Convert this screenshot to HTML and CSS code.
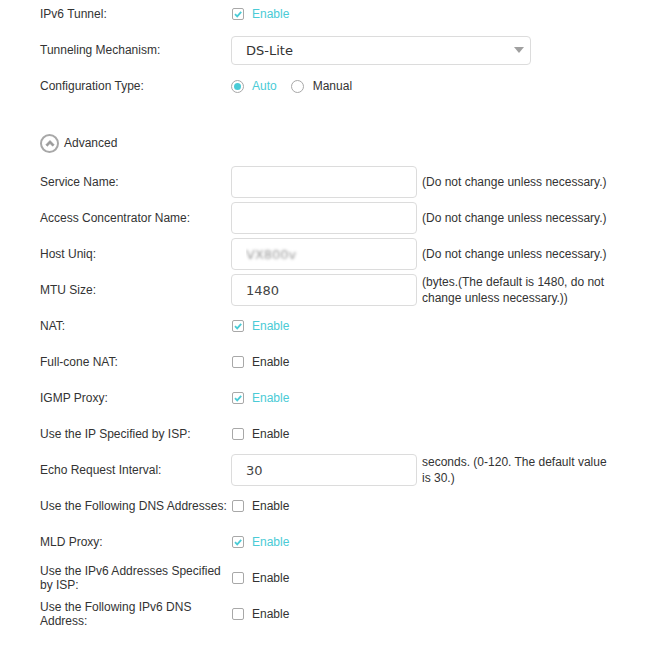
FILE: index.html
```html
<!DOCTYPE html>
<html lang="en">
<head>
  <meta charset="UTF-8" />
  <title>IPv6 - DS-Lite</title>
  <link rel="stylesheet" href="styles.css">
</head>
<body>

<!-- IPv6 tunnel settings -->
<div class="form">
  <div class="row">
    <div class="label">IPv6 Tunnel:</div>
    <label class="check on">
      <span class="box"><svg viewBox="0 0 12 12" width="12" height="12"><path d="M3 6.2 L5.2 8.4 L9.2 3.8" fill="none" stroke="#4acbd6" stroke-width="1.8"/></svg></span>
      Enable
    </label>
  </div>

  <div class="row">
    <div class="label">Tunneling Mechanism:</div>
    <div class="select">
      <span>DS-Lite</span>
      <svg class="arrow" viewBox="0 0 10 6" width="10" height="6"><path d="M0 0 H10 L5 6 Z" fill="#a0a0a0"/></svg>
    </div>
  </div>

  <div class="row">
    <div class="label">Configuration Type:</div>
    <label class="radio on"><span class="dot"></span>Auto</label>
    <label class="radio"><span class="dot"></span>Manual</label>
  </div>

  <!-- Advanced block -->
  <div class="advanced">
    <span class="adv-icon"><svg viewBox="0 0 14 14" width="14" height="14"><path d="M2.8 8.8 L7 4.4 L11.2 8.8 L9.6 10.2 L7 7.6 L4.4 10.2 Z" fill="#9a9a9a" stroke="#9a9a9a" stroke-width="0.6" stroke-linejoin="round"/></svg></span>
    Advanced
  </div>

  <div class="row">
    <div class="label">Service Name:</div>
    <input class="text" type="text" value="">
    <div class="hint">(Do not change unless necessary.)</div>
  </div>

  <div class="row">
    <div class="label">Access Concentrator Name:</div>
    <input class="text" type="text" value="">
    <div class="hint">(Do not change unless necessary.)</div>
  </div>

  <div class="row">
    <div class="label">Host Uniq:</div>
    <input class="text blurred" type="text" value="VX800v">
    <div class="hint">(Do not change unless necessary.)</div>
  </div>

  <div class="row">
    <div class="label">MTU Size:</div>
    <input class="text" type="text" value="1480">
    <div class="hint">(bytes.(The default is 1480, do not change unless necessary.))</div>
  </div>

  <div class="row">
    <div class="label">NAT:</div>
    <label class="check on">
      <span class="box"><svg viewBox="0 0 12 12" width="12" height="12"><path d="M3 6.2 L5.2 8.4 L9.2 3.8" fill="none" stroke="#4acbd6" stroke-width="1.8"/></svg></span>
      Enable
    </label>
  </div>

  <div class="row">
    <div class="label">Full-cone NAT:</div>
    <label class="check"><span class="box"></span>Enable</label>
  </div>

  <div class="row">
    <div class="label">IGMP Proxy:</div>
    <label class="check on">
      <span class="box"><svg viewBox="0 0 12 12" width="12" height="12"><path d="M3 6.2 L5.2 8.4 L9.2 3.8" fill="none" stroke="#4acbd6" stroke-width="1.8"/></svg></span>
      Enable
    </label>
  </div>

  <div class="row">
    <div class="label">Use the IP Specified by ISP:</div>
    <label class="check"><span class="box"></span>Enable</label>
  </div>

  <div class="row">
    <div class="label">Echo Request Interval:</div>
    <input class="text" type="text" value="30">
    <div class="hint">seconds. (0-120. The default value is 30.)</div>
  </div>

  <div class="row">
    <div class="label">Use the Following DNS Addresses:</div>
    <label class="check"><span class="box"></span>Enable</label>
  </div>

  <div class="row">
    <div class="label">MLD Proxy:</div>
    <label class="check on">
      <span class="box"><svg viewBox="0 0 12 12" width="12" height="12"><path d="M3 6.2 L5.2 8.4 L9.2 3.8" fill="none" stroke="#4acbd6" stroke-width="1.8"/></svg></span>
      Enable
    </label>
  </div>

  <div class="row">
    <div class="label">Use the IPv6 Addresses Specified by ISP:</div>
    <label class="check"><span class="box"></span>Enable</label>
  </div>

  <div class="row">
    <div class="label">Use the Following IPv6 DNS Address:</div>
    <label class="check"><span class="box"></span>Enable</label>
  </div>
</div>

</body>
</html>
```

FILE: styles.css
```css
* {
  margin: 0;
  padding: 0;
  box-sizing: border-box;
}

body {
  font-family: "Liberation Sans", Arial, sans-serif;
  font-size: 12px;
  color: #333;
  background: #fff;
}

/* общая форма */
.form {
  margin-top: -4px;
  padding-left: 40px;
}

.row {
  display: flex;
  align-items: center;
  height: 36px;
}

.label {
  width: 191px;
  flex-shrink: 0;
  line-height: 14px;
  padding-right: 4px;
}

/* чекбоксы */
.check {
  display: flex;
  align-items: center;
  margin-left: 1px;
}

.check .box {
  width: 12px;
  height: 12px;
  border: 1px solid #a8a8a8;
  border-radius: 2px;
  margin-right: 8px;
  display: flex;
  align-items: center;
  justify-content: center;
}

.check .box svg {
  display: block;
  margin: -1px;
}

.check.on,
.radio.on {
  color: #4acbd6;
}

/* радио */
.radio {
  display: flex;
  align-items: center;
  margin-right: 14px;
}

.radio .dot {
  width: 13px;
  height: 13px;
  border: 1px solid #a8a8a8;
  border-radius: 50%;
  margin-right: 8px;
  position: relative;
}

.radio.on .dot::after {
  content: '';
  position: absolute;
  top: 2px;
  left: 2px;
  width: 7px;
  height: 7px;
  border-radius: 50%;
  background: #4acbd6;
}

.radio + .radio .dot {
  margin-right: 9px;
}

/* выпадающий список */
.select {
  width: 300px;
  height: 29px;
  border: 1px solid #dcdcdc;
  border-radius: 4px;
  display: flex;
  align-items: center;
  justify-content: space-between;
  padding: 0 6px 0 14px;
  font-family: "DejaVu Sans", sans-serif;
  font-size: 13px;
  color: #333;
}

.select .arrow {
  display: block;
}

/* Advanced */
.advanced {
  display: flex;
  align-items: center;
  height: 36px;
  margin: 21px 0 3px;
}

.adv-icon {
  width: 19px;
  height: 19px;
  border: 2px solid #a8a8a8;
  border-radius: 50%;
  display: flex;
  align-items: center;
  justify-content: center;
  margin-right: 5px;
}

.adv-icon svg {
  display: block;
}

/* поля ввода */
.text {
  width: 186px;
  height: 32px;
  flex-shrink: 0;
  border: 1px solid #dcdcdc;
  border-radius: 4px;
  padding: 0 14px;
  font-family: "DejaVu Sans", sans-serif;
  font-size: 13px;
  color: #444;
  outline: none;
}

.text.blurred {
  color: transparent;
  text-shadow: 0 0 3px #999;
}

.hint {
  width: 190px;
  margin-left: 5px;
  line-height: 16px;
}
```
